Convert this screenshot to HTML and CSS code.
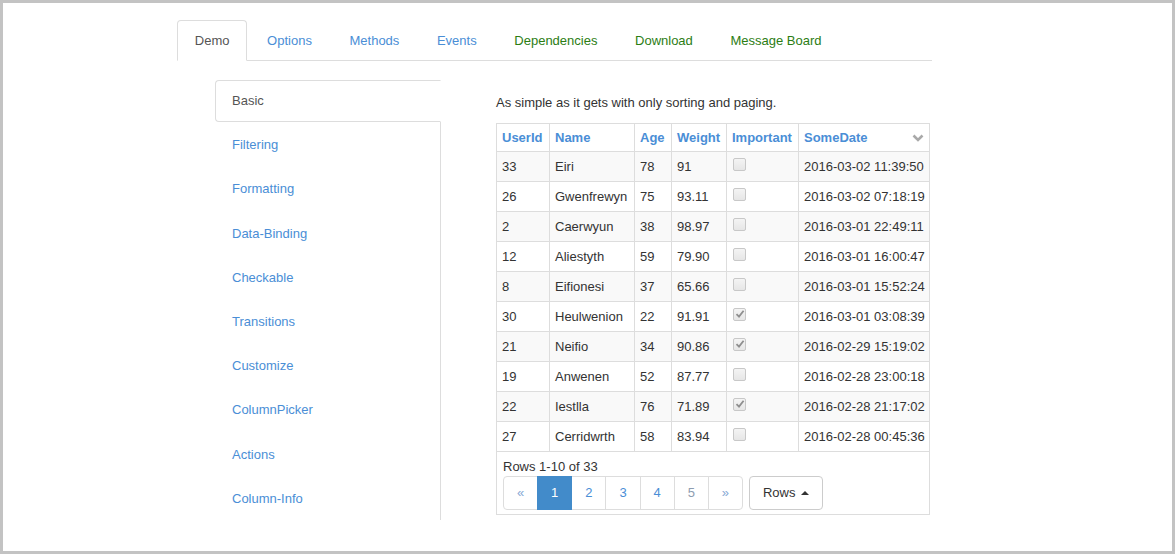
FILE: index.html
```html
<!DOCTYPE html>
<html>
<head>
<meta charset="utf-8">
<link rel="stylesheet" href="styles.css">
</head>
<body>
<div class="page">
  <ul class="tabs">
    <li class="active"><a>Demo</a></li>
    <li><a>Options</a></li>
    <li><a>Methods</a></li>
    <li><a>Events</a></li>
    <li class="green"><a>Dependencies</a></li>
    <li class="green"><a>Download</a></li>
    <li class="green"><a>Message Board</a></li>
  </ul>
  <div class="demo">
    <ul class="side">
      <li class="active"><a>Basic</a></li>
      <li><a>Filtering</a></li>
      <li><a>Formatting</a></li>
      <li><a>Data-Binding</a></li>
      <li><a>Checkable</a></li>
      <li><a>Transitions</a></li>
      <li><a>Customize</a></li>
      <li><a>ColumnPicker</a></li>
      <li><a>Actions</a></li>
      <li><a>Column-Info</a></li>
    </ul>
    <div class="main">
      <p class="intro">As simple as it gets with only sorting and paging.</p>
      <table class="grid">
        <colgroup>
          <col class="c1"><col class="c2"><col class="c3"><col class="c4"><col class="c5"><col class="c6">
        </colgroup>
        <thead>
          <tr>
            <th>UserId</th><th>Name</th><th>Age</th><th>Weight</th><th>Important</th>
            <th><div class="th-flex"><span>SomeDate</span>
              <svg class="chev" width="12" height="8" viewBox="0 0 12 8"><path d="M1.5 1.5 L6 6 L10.5 1.5" fill="none" stroke="#a9a9a9" stroke-width="2.6"/></svg></div></th>
          </tr>
        </thead>
        <tbody>
          <tr><td>33</td><td>Eiri</td><td>78</td><td>91</td><td><span class="cb"></span></td><td>2016-03-02 11:39:50</td></tr>
          <tr><td>26</td><td>Gwenfrewyn</td><td>75</td><td>93.11</td><td><span class="cb"></span></td><td>2016-03-02 07:18:19</td></tr>
          <tr><td>2</td><td>Caerwyun</td><td>38</td><td>98.97</td><td><span class="cb"></span></td><td>2016-03-01 22:49:11</td></tr>
          <tr><td>12</td><td>Aliestyth</td><td>59</td><td>79.90</td><td><span class="cb"></span></td><td>2016-03-01 16:00:47</td></tr>
          <tr><td>8</td><td>Eifionesi</td><td>37</td><td>65.66</td><td><span class="cb"></span></td><td>2016-03-01 15:52:24</td></tr>
          <tr><td>30</td><td>Heulwenion</td><td>22</td><td>91.91</td><td><span class="cb checked"><svg width="10" height="10" viewBox="0 0 10 10"><path d="M1.5 5.2 L4 7.6 L8.6 1.8" fill="none" stroke="#8f8f8f" stroke-width="1.8"/></svg></span></td><td>2016-03-01 03:08:39</td></tr>
          <tr><td>21</td><td>Neifio</td><td>34</td><td>90.86</td><td><span class="cb checked"><svg width="10" height="10" viewBox="0 0 10 10"><path d="M1.5 5.2 L4 7.6 L8.6 1.8" fill="none" stroke="#8f8f8f" stroke-width="1.8"/></svg></span></td><td>2016-02-29 15:19:02</td></tr>
          <tr><td>19</td><td>Anwenen</td><td>52</td><td>87.77</td><td><span class="cb"></span></td><td>2016-02-28 23:00:18</td></tr>
          <tr><td>22</td><td>Iestlla</td><td>76</td><td>71.89</td><td><span class="cb checked"><svg width="10" height="10" viewBox="0 0 10 10"><path d="M1.5 5.2 L4 7.6 L8.6 1.8" fill="none" stroke="#8f8f8f" stroke-width="1.8"/></svg></span></td><td>2016-02-28 21:17:02</td></tr>
          <tr><td>27</td><td>Cerridwrth</td><td>58</td><td>83.94</td><td><span class="cb"></span></td><td>2016-02-28 00:45:36</td></tr>
        </tbody>
        <tfoot>
          <tr><td colspan="6" class="foot">
            <div class="count">Rows 1-10 of 33</div>
            <div class="pager-row">
              <div class="pager">
                <a class="dim">&laquo;</a><a class="active">1</a><a>2</a><a>3</a><a>4</a><a class="gray">5</a><a class="dim">&raquo;</a>
              </div>
              <button class="rows-btn">Rows <span class="caret"></span></button>
            </div>
          </td></tr>
        </tfoot>
      </table>
    </div>
  </div>
</div>
</body>
</html>
```

FILE: styles.css
```css
html, body {
  margin: 0;
  padding: 0;
}
body {
  width: 1175px;
  height: 554px;
  box-sizing: border-box;
  border: 3px solid #c3c3c3;
  background: #fff;
  font-family: "Liberation Sans", Arial, sans-serif;
  font-size: 13px;
  color: #333;
  overflow: hidden;
}
.page {
  padding: 17px 0 0 174px;
}
ul {
  list-style: none;
  margin: 0;
  padding: 0;
}
.tabs {
  display: flex;
  width: 755px;
  border-bottom: 1px solid #ddd;
}
.tabs li {
  margin-right: 2px;
  margin-bottom: -1px;
}
.tabs a {
  display: block;
  padding: 10px 16.8px;
  line-height: 19px;
  border: 1px solid transparent;
  border-radius: 4px 4px 0 0;
  color: #4a8ed6;
}
.tabs li.green a {
  color: #2c7d14;
}
.tabs li.active a {
  color: #555;
  border-color: #ddd #ddd transparent #ddd;
  background: #fff;
}
.demo {
  display: flex;
  align-items: flex-start;
  margin-top: 19px;
  padding-left: 38px;
}
.side {
  width: 226px;
  box-sizing: border-box;
  border-right: 1px solid #ddd;
  flex: none;
}
.side li + li {
  margin-top: 2px;
}
.side a {
  display: block;
  padding: 11px 16px;
  line-height: 18.2px;
  border: 1px solid transparent;
  border-radius: 4px 0 0 4px;
  color: #4a8ed6;
}
.side li.active {
  margin-right: -1px;
}
.side li.active a {
  color: #555;
  background: #fff;
  border-color: #ddd transparent #ddd #ddd;
}
.main {
  margin-left: 55px;
  padding-top: 13px;
}
.intro {
  margin: 0 0 11px;
  line-height: 19px;
}
.grid {
  width: 433px;
  table-layout: fixed;
  border-collapse: collapse;
  border: 1px solid #ddd;
}
.c1 { width: 53px; }
.c2 { width: 85px; }
.c3 { width: 37px; }
.c4 { width: 55px; }
.c5 { width: 72px; }
.c6 { width: 131px; }
.grid th, .grid td {
  border: 1px solid #ddd;
  padding: 5px;
  text-align: left;
  white-space: nowrap;
  overflow: hidden;
}
.grid th {
  color: #4a8ed6;
  font-weight: bold;
  line-height: 17px;
}
.grid td {
  line-height: 19px;
  vertical-align: top;
}
.grid tbody tr:nth-child(odd) td {
  background: #f9f9f9;
}
.th-flex {
  display: flex;
  justify-content: space-between;
  align-items: center;
}
.chev {
  display: block;
}
.cb {
  display: block;
  width: 11px;
  height: 11px;
  margin: 1px 0 0 1px;
  border: 1px solid #c8c8c8;
  border-radius: 2px;
  background: linear-gradient(#f4f4f4, #e6e6e6);
  position: relative;
}
.cb svg {
  position: absolute;
  left: 1px;
  top: 0px;
}
.grid td.foot {
  padding: 5px 6px 4px;
  background: #fff;
}
.count {
  line-height: 19px;
}
.pager-row {
  display: flex;
  align-items: stretch;
}
.pager {
  display: flex;
}
.pager a {
  display: block;
  width: 35.15px;
  box-sizing: border-box;
  text-align: center;
  padding: 6px 0;
  line-height: 20px;
  border: 1px solid #ddd;
  margin-left: -1px;
  color: #4a8ed6;
  font-size: 13px;
  background: #fff;
}
.pager a:first-child {
  margin-left: 0;
  border-radius: 4px 0 0 4px;
}
.pager a:last-child {
  border-radius: 0 4px 4px 0;
}
.pager a.active {
  background: #428bca;
  border-color: #428bca;
  color: #fff;
  position: relative;
}
.pager a.dim {
  color: #86a9d4;
}
.pager a.gray {
  color: #8d9cb0;
}
.rows-btn {
  margin-left: 6px;
  font-family: "Liberation Sans", Arial, sans-serif;
  font-size: 13px;
  color: #333;
  background: #fff;
  border: 1px solid #ccc;
  border-radius: 4px;
  padding: 6px 13px;
  line-height: 20px;
  display: flex;
  align-items: center;
}
.caret {
  display: inline-block;
  width: 0;
  height: 0;
  margin-left: 5px;
  border-left: 4px solid transparent;
  border-right: 4px solid transparent;
  border-bottom: 4px solid #333;
}
```
